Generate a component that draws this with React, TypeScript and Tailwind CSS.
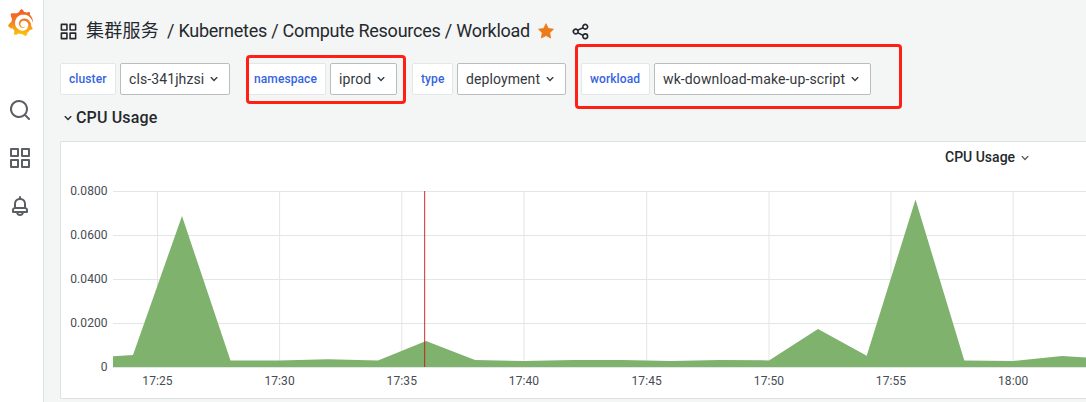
import type { ReactNode } from "react";
import { SiGrafana } from "react-icons/si";

const paths = {
  apps: "M10,13H3a1,1,0,0,0-1,1v7a1,1,0,0,0,1,1h7a1,1,0,0,0,1-1V14A1,1,0,0,0,10,13ZM9,20H4V15H9ZM21,2H14a1,1,0,0,0-1,1v7a1,1,0,0,0,1,1h7a1,1,0,0,0,1-1V3A1,1,0,0,0,21,2ZM20,9H15V4h5Zm1,4H14a1,1,0,0,0-1,1v7a1,1,0,0,0,1,1h7a1,1,0,0,0,1-1V14A1,1,0,0,0,21,13Zm-1,7H15V15h5ZM10,2H3A1,1,0,0,0,2,3v7a1,1,0,0,0,1,1h7a1,1,0,0,0,1-1V3A1,1,0,0,0,10,2ZM9,9H4V4H9Z",
  bell: "M18,13.18V10a6,6,0,0,0-5-5.91V3a1,1,0,0,0-2,0V4.09A6,6,0,0,0,6,10v3.18A3,3,0,0,0,4,16v2a1,1,0,0,0,1,1H8.14a4,4,0,0,0,7.72,0H19a1,1,0,0,0,1-1V16A3,3,0,0,0,18,13.18ZM8,10a4,4,0,0,1,8,0v3H8Zm4,10a2,2,0,0,1-1.72-1h3.44A2,2,0,0,1,12,20Zm6-3H6V16a1,1,0,0,1,1-1H17a1,1,0,0,1,1,1Z",
  search:
    "M21.71,20.29,18,16.61A9,9,0,1,0,16.61,18l3.68,3.68a1,1,0,0,0,1.42,0A1,1,0,0,0,21.71,20.29ZM11,18a7,7,0,1,1,7-7A7,7,0,0,1,11,18Z",
  down: "M17,9.17a1,1,0,0,0-1.41,0L12,12.71,8.46,9.17a1,1,0,0,0-1.41,0,1,1,0,0,0,0,1.42l4.24,4.24a1,1,0,0,0,1.42,0L17,10.59A1,1,0,0,0,17,9.17Z",
  share:
    "M18,14a4,4,0,0,0-3.08,1.48l-5.1-2.35a3.64,3.64,0,0,0,0-2.26l5.1-2.35A4,4,0,1,0,14,6a4.17,4.17,0,0,0,.07.71L8.79,9.14a4,4,0,1,0,0,5.72l5.28,2.43A4.17,4.17,0,0,0,14,18a4,4,0,1,0,4-4ZM18,4a2,2,0,1,1-2,2A2,2,0,0,1,18,4ZM6,14a2,2,0,1,1,2-2A2,2,0,0,1,6,14Zm12,6a2,2,0,1,1,2-2A2,2,0,0,1,18,20Z",
  star: "M12 2.2 L15 8.5 L22 9.5 L17 14.4 L18.2 21.4 L12 18.1 L5.8 21.4 L7 14.4 L2 9.5 L9 8.5 Z",
};

function Icon({ name, className }: { name: keyof typeof paths; className: string }) {
  return (
    <svg viewBox="0 0 24 24" fill="currentColor" stroke={name === "star" ? "currentColor" : "none"} strokeLinejoin="round" className={`shrink-0 ${className}`}>
      <path d={paths[name]} />
    </svg>
  );
}

function Variable({ label, value, labelClass, valueClass }: { label: string; value: string; labelClass: string; valueClass: string }) {
  return (
    <div className="flex h-8 shrink-0 gap-1">
      <div className={`flex items-center rounded-xs border border-[#e4e7e7] bg-white text-xs font-medium text-[#3564df] ${labelClass}`}>
        {label}
      </div>
      <div className={`flex items-center justify-between rounded-xs border border-[#b9bdbf] bg-white pr-[7px] pl-2 text-sm text-[#35383d] ${valueClass}`}>
        <span>{value}</span>
        <Icon name="down" className="size-4" />
      </div>
    </div>
  );
}

function Highlight({ className, children }: { className: string; children: ReactNode }) {
  return (
    <div className="relative">
      {children}
      <div className={`pointer-events-none absolute rounded-sm border-3 border-[#ff2015] ${className}`} />
    </div>
  );
}

const ticksY = [
  ["0.0800", 191],
  ["0.0600", 235],
  ["0.0400", 279],
  ["0.0200", 323],
  ["0", 367],
] as const;

const ticksX = [
  ["17:25", 157.5],
  ["17:30", 279.6],
  ["17:35", 401.8],
  ["17:40", 524],
  ["17:45", 646.7],
  ["17:50", 769],
  ["17:55", 891],
  ["18:00", 1013.2],
] as const;

const area =
  "113,367 113,356.3 133,355 182,216 230.5,360.6 279,360.6 328,359.3 378,360.6 426,341 475,360 524,361 573,360 622,360 671,361 720,360 769,360.4 818,329 866.7,355.8 915.5,199.5 964.3,360.6 1013,361 1062,356 1086,357.5 1086,367";

function Chart() {
  return (
    <svg viewBox="61 181 1025 217" width="1025" height="217" className="block">
      <g stroke="#e4e5e6" strokeWidth="1">
        {ticksY.map(([t, y]) => (
          <line key={t} x1="113" x2="1086" y1={y + 0.5} y2={y + 0.5} />
        ))}
        {ticksX.map(([t, x]) => (
          <line key={t} x1={x} x2={x} y1="191" y2="367" />
        ))}
      </g>
      <polygon points={area} fill="#7eb26d" />
      <rect x="424" y="191" width="1.2" height="176" fill="#c4161c" fillOpacity="0.75" />
      <g fill="#464c54" fontSize="12" className="font-[Roboto,sans-serif]" letterSpacing="0.1">
        {ticksY.map(([t, y]) => (
          <text key={t} x="107.7" y={y + 4} textAnchor="end">
            {t}
          </text>
        ))}
        {ticksX.map(([t, x]) => (
          <text key={t} x={x} y="385" textAnchor="middle">
            {t}
          </text>
        ))}
      </g>
    </svg>
  );
}

export default function App() {
  return (
    <div className="flex h-[402px] w-[1086px] overflow-hidden bg-[#f4f5f5] font-[Roboto,'Noto_Sans_CJK_SC',sans-serif] text-[#24292e]">
      <nav className="flex w-11 shrink-0 flex-col border-r border-[#dfe3e3] bg-white text-[#5b5f64]">
        <div className="flex h-[86px] pt-[9px] pl-[7px]">
          <SiGrafana className="size-[27px]" style={{ fill: "url(#flame)" }} />
          <svg className="size-0">
            <defs>
              <linearGradient id="flame" x1="0" y1="0" x2="0" y2="1">
                <stop offset="0" stopColor="#f05a28" />
                <stop offset="0.45" stopColor="#f47b25" />
                <stop offset="1" stopColor="#fbca0a" />
              </linearGradient>
            </defs>
          </svg>
        </div>
        {(["search", "apps", "bell"] as const).map((n) => (
          <div key={n} className="flex h-12 items-center pl-2">
            <Icon name={n} className="size-6" />
          </div>
        ))}
      </nav>
      <main className="flex min-w-0 flex-1 flex-col pl-4">
        <header className="flex h-[63px] shrink-0 items-center pb-px text-lg whitespace-nowrap">
          <Icon name="apps" className="-ml-px size-[19px]" />
          <span className="ml-2 tracking-[0.25px]">集群服务</span>
          <span className="ml-2 tracking-[-0.24px]">/ Kubernetes / Compute Resources / Workload</span>
          <Icon name="star" className="ml-[7px] size-[18px] text-[#eb7b18]" />
          <Icon name="share" className="ml-4 size-[19px]" />
        </header>
        <div className="flex h-8 shrink-0">
          <Variable label="cluster" value="cls-341jhzsi" labelClass="w-14 pl-2 tracking-[0.1px]" valueClass="w-[110px] tracking-[0.1px]" />
          <div className="ml-4">
            <Highlight className="-top-2 left-0 h-[49px] w-[160px]">
              <Variable label="namespace" value="iprod" labelClass="w-20 pl-[7px] tracking-[0.1px]" valueClass="w-[67px] tracking-[0.1px]" />
            </Highlight>
          </div>
          <div className="ml-[15px]">
            <Variable label="type" value="deployment" labelClass="w-[41px] pl-2 tracking-[0.1px]" valueClass="w-[109px] tracking-[0.1px]" />
          </div>
          <div className="ml-[15px]">
            <Highlight className="-top-[19px] -left-1.5 h-[65px] w-[327px]">
              <Variable label="workload" value="wk-download-make-up-script" labelClass="w-[69px] pl-2 tracking-[0.1px]" valueClass="w-[217px] tracking-[0.12px]" />
            </Highlight>
          </div>
        </div>
        <div className="flex h-[46px] shrink-0 items-center text-base font-medium">
          <Icon name="down" className="size-4" />
          <span className="tracking-[0.15px]">CPU Usage</span>
        </div>
        <section className="flex h-[258px] shrink-0 flex-col rounded-l-xs border border-r-0 border-[#dde1e2] bg-white">
          <div className="flex h-[39px] shrink-0 items-start pt-[5px] pl-[884px] text-sm font-medium">
            <span>CPU Usage</span>
            <Icon name="down" className="mt-[3px] ml-0.5 size-4 text-[#5b5f64]" />
          </div>
          <Chart />
        </section>
      </main>
    </div>
  );
}
